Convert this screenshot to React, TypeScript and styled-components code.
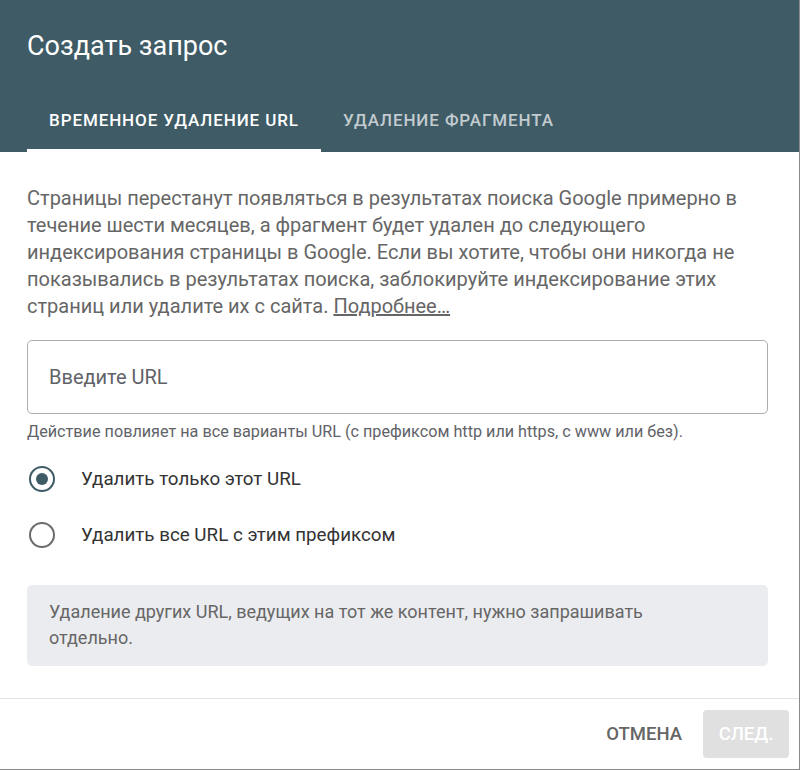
import React from "react";
import styled, { createGlobalStyle } from "styled-components";

const Global = createGlobalStyle`
  html, body { margin: 0; padding: 0; background: #fff; }
  body { font-family: Roboto, "Noto Sans", Arial, sans-serif; }
  * { box-sizing: border-box; }
`;

const Dialog = styled.div`
  width: 800px;
  height: 770px;
  display: flex;
  flex-direction: column;
  background: #fff;
  border-right: 1px solid #8a8a8a;
  border-bottom: 1px solid #8a8a8a;
`;

const Header = styled.div`
  background: #3e5b66;
  padding: 0 27px;
  height: 152px;
  display: flex;
  flex-direction: column;
`;

const Title = styled.h1`
  margin: 0;
  padding-top: 30px;
  font-size: 27px;
  font-weight: 400;
  line-height: 32px;
  color: #fff;
`;

const Tabs = styled.div`
  display: flex;
  margin-top: auto;
`;

const Tab = styled.div<{ $active?: boolean }>`
  padding: 3px 22px 0;
  height: 64px;
  display: flex;
  align-items: center;
  font-size: 17px;
  font-weight: 500;
  letter-spacing: 0.9px;
  text-transform: uppercase;
  white-space: nowrap;
  color: ${(p) => (p.$active ? "#fff" : "rgba(255,255,255,0.7)")};
  border-bottom: 3px solid ${(p) => (p.$active ? "#fff" : "transparent")};
`;

const Content = styled.div`
  padding: 33px 31px 0 27px;
  flex: 1;
`;

const Description = styled.p`
  margin: 0;
  font-size: 20px;
  line-height: 27px;
  color: #666;
`;

const Link = styled.a`
  color: #666;
  text-decoration: underline;
`;

const UrlField = styled.div`
  margin-top: 20px;
  height: 74px;
  border: 1px solid #a9adb2;
  border-radius: 5px;
  display: flex;
  align-items: center;
  padding: 0 21px;
  font-size: 20px;
  color: #5f6368;
`;

const Helper = styled.div`
  margin-top: 8px;
  font-size: 16.2px;
  line-height: 20px;
  color: #5f6368;
  white-space: nowrap;
`;

const RadioGroup = styled.div`
  margin-top: 13px;
  display: flex;
  flex-direction: column;
  gap: 8px;
`;

const RadioRow = styled.label`
  display: flex;
  align-items: center;
  height: 48px;
  gap: 26px;
  font-size: 18.8px;
  color: #333;
`;

const RadioCircle = styled.span<{ $checked?: boolean }>`
  width: 26px;
  height: 26px;
  margin-left: 2px;
  border-radius: 50%;
  border: 2px solid ${(p) => (p.$checked ? "#3e5b66" : "#6b6b6b")};
  display: flex;
  align-items: center;
  justify-content: center;
  &::after {
    content: "";
    width: 12px;
    height: 12px;
    border-radius: 50%;
    background: ${(p) => (p.$checked ? "#3e5b66" : "transparent")};
  }
`;

const Note = styled.div`
  margin-top: 26px;
  background: #ebecef;
  border-radius: 5px;
  padding: 14px 22px 15px;
  font-size: 18px;
  line-height: 26px;
  color: #666;
`;

const Footer = styled.div`
  border-top: 1px solid #e3e3e3;
  height: 71px;
  display: flex;
  align-items: center;
  justify-content: flex-end;
  gap: 21px;
  padding: 0 10px 1px 0;
`;

const Button = styled.button<{ $filled?: boolean }>`
  font-family: Roboto, "Noto Sans", Arial, sans-serif;
  font-size: 18.5px;
  font-weight: 500;
  text-transform: uppercase;
  border: none;
  border-radius: 4px;
  height: 48px;
  padding: 0 ${(p) => (p.$filled ? "15px" : "0")};
  min-width: ${(p) => (p.$filled ? "86px" : "0")};
  background: ${(p) => (p.$filled ? "#e0e0e0" : "transparent")};
  color: ${(p) => (p.$filled ? "#fff" : "#666")};
`;

export default function App() {
  return (
    <>
      <Global />
      <Dialog>
        <Header>
          <Title>Создать запрос</Title>
          <Tabs>
            <Tab $active>Временное удаление URL</Tab>
            <Tab>Удаление фрагмента</Tab>
          </Tabs>
        </Header>
        <Content>
          <Description>
            Страницы перестанут появляться в результатах поиска Google примерно в<br />
            течение шести месяцев, а фрагмент будет удален до следующего<br />
            индексирования страницы в Google. Если вы хотите, чтобы они никогда не<br />
            показывались в результатах поиска, заблокируйте индексирование этих<br />
            страниц или удалите их с сайта. <Link>Подробнее…</Link>
          </Description>
          <UrlField>Введите URL</UrlField>
          <Helper>
            Действие повлияет на все варианты URL (с префиксом http или https, с www или без).
          </Helper>
          <RadioGroup>
            <RadioRow>
              <RadioCircle $checked />
              Удалить только этот URL
            </RadioRow>
            <RadioRow>
              <RadioCircle />
              Удалить все URL с этим префиксом
            </RadioRow>
          </RadioGroup>
          <Note>
            Удаление других URL, ведущих на тот же контент, нужно запрашивать
            <br />
            отдельно.
          </Note>
        </Content>
        <Footer>
          <Button>Отмена</Button>
          <Button $filled>След.</Button>
        </Footer>
      </Dialog>
    </>
  );
}
